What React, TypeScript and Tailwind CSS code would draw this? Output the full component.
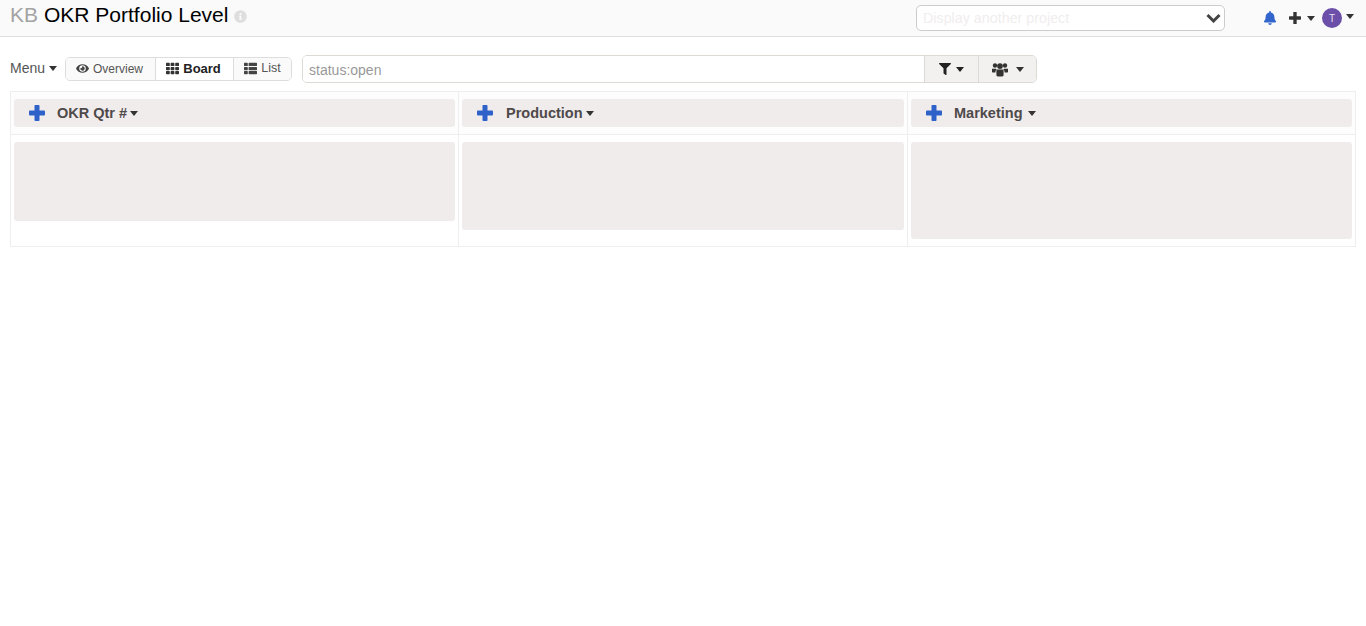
import { FaInfoCircle, FaEye, FaTh, FaThList, FaBell, FaFilter } from "react-icons/fa";

function Caret({ className = "" }: { className?: string }) {
  return <span className={"inline-block w-0 h-0 border-x-[4.5px] border-t-[5px] border-x-transparent border-t-current " + className} />;
}

function ThickPlus({ className = "", bar = 5 }: { className?: string; bar?: number }) {
  const a = (16 - bar) / 2;
  return (
    <svg viewBox="0 0 16 16" className={className} fill="currentColor">
      <rect x={a} y="0" width={bar} height="16" rx="0.8" />
      <rect x="0" y={a} width="16" height={bar} rx="0.8" />
    </svg>
  );
}

function Users({ className = "" }: { className?: string }) {
  return (
    <svg viewBox="0 0 16 14" className={className} fill="currentColor">
      <circle cx="3" cy="3" r="2.2" />
      <circle cx="13" cy="3" r="2.2" />
      <circle cx="8" cy="3.6" r="2.9" />
      <path d="M0 6.3h3.6c.6 0 1 .3 1.1.7-.9.7-1.3 1.7-1.3 3H0.6C.2 10 0 9.6 0 9.2z" />
      <path d="M16 6.3h-3.6c-.6 0-1 .3-1.1.7.9.7 1.3 1.7 1.3 3h2.8c.4 0 .6-.4.6-.8z" />
      <path d="M4.4 8.4c0-.9.6-1.4 1.4-1.4h4.4c.8 0 1.4.5 1.4 1.4v4.2c0 .8-.5 1.4-1.4 1.4H5.8c-.9 0-1.4-.6-1.4-1.4z" />
    </svg>
  );
}

const columns = [
  { name: "OKR Qtr #", cardH: "h-[79px]", labelM: "ml-[12px]", caretM: "ml-[3px]" },
  { name: "Production", cardH: "h-[88px]", labelM: "ml-[13px]", caretM: "ml-[3px]" },
  { name: "Marketing", cardH: "h-[97px]", labelM: "ml-[12px]", caretM: "ml-[5px]" },
];

export default function App() {
  return (
    <div className="min-h-[626px] bg-white font-['Liberation_Sans',Arial,sans-serif] text-[#333]">
      <header className="h-[37px] bg-[#fafafa] border-b border-[#dedede] flex items-start pl-[10px]">
        <h1 className="text-[21px] leading-[30px] flex items-center text-black">
          <span className="text-[#a3a3a3] mr-[6px]">KB</span>
          <span>OKR Portfolio Level</span>
          <FaInfoCircle className="ml-[6px] mt-[3px] text-[#dedede] w-[13px] h-[13px]" />
        </h1>
        <div className="ml-auto flex items-center pt-[5px] mr-[12px]">
          <div className="w-[309px] h-[26px] bg-white border border-[#cccccc] rounded-[5px] flex items-center justify-between pl-[6px] pr-[3px]">
            <span className="text-[14.3px] pt-[2px] text-[#f0eeee]">Display another project</span>
            <svg viewBox="0 0 15 10" className="w-[15px] h-[10px] text-[#444]" fill="none" stroke="currentColor" strokeWidth="3">
              <path d="M1.5 2l6 6 6-6" />
            </svg>
          </div>
          <FaBell className="ml-[38px] w-[14px] h-[14px] text-[#3366cc]" />
          <ThickPlus bar={4.5} className="ml-[12px] w-[12px] h-[12px] text-[#333]" />
          <Caret className="ml-[6px] text-[#333]" />
          <div className="ml-[7px] w-[20px] h-[20px] rounded-full bg-[#6b4fa8] text-[#e8e0f0] text-[10px] flex items-center justify-center">T</div>
          <Caret className="ml-[4px] mb-[4px] text-[#333]" />
        </div>
      </header>

      <div className="flex items-center pl-[10px] mt-[18px] h-[28px]">
        <span className="text-[14px] leading-[24px] mb-[2px] text-[#555] flex items-center gap-[4px]">Menu <Caret className="text-[#333]" /></span>
        <div className="ml-[8px] h-[24px] flex border border-[#dddddd] rounded-[5px] text-[12px] text-[#555] overflow-hidden mb-[1px]">
          <span className="w-[90px] flex items-center justify-center gap-[4px] pr-[2px] bg-[#fafafa] border-r border-[#dddddd]">
            <FaEye className="w-[13px] h-[13px] text-[#444]" />Overview
          </span>
          <span className="w-[78px] flex items-center justify-center gap-[4px] pr-[2px] bg-white border-r border-[#dddddd] text-[13px] font-bold text-[#222]">
            <FaTh className="w-[13px] h-[13px] text-[#333]" />Board
          </span>
          <span className="w-[57px] flex items-center justify-center gap-[4px] bg-[#fafafa] text-[12.5px]">
            <FaThList className="w-[13px] h-[13px] text-[#444]" />List
          </span>
        </div>
        <div className="ml-[10px] w-[735px] h-[28px] flex border border-[#dddad6] rounded-[5px] overflow-hidden">
          <span className="flex-1 flex items-center pl-[6px] pt-[2px] text-[14px] text-[#999] bg-white">status:open</span>
          <span className="w-[54px] flex items-center justify-center gap-[5px] bg-[#f3f1ef] border-l border-[#dddad6] text-[#222]">
            <FaFilter className="w-[12px] h-[12px]" /><Caret />
          </span>
          <span className="w-[58px] flex items-center justify-center gap-[7px] bg-[#f3f1ef] border-l border-[#dddad6] text-[#333]">
            <Users className="w-[16px] h-[15px]" /><Caret className="ml-[1px]" />
          </span>
        </div>
      </div>

      <div className="mx-[10px] mt-[8px] border border-[#eeeeee] grid grid-cols-[448px_449px_447px]">
        {columns.map((c, i) => (
          <div key={c.name} className={"h-[43px] bg-[#fdfdfd] border-b border-[#eeeeee] pt-[7px] pl-[3px] pr-[3px] " + (i < 2 ? "border-r" : "")}>
            <div className="h-[28px] bg-[#f0ecec] rounded-[3px] flex items-center pl-[15px] text-[14.5px] font-bold text-[#4f4a4a]">
              <ThickPlus className="w-[16px] h-[16px] text-[#2f62c9]" />
              <span className={c.labelM + " pt-[2px]"}>{c.name}</span>
              <Caret className={c.caretM + " text-[#333]"} />
            </div>
          </div>
        ))}
        {columns.map((c, i) => (
          <div key={c.name} className={"h-[111px] pt-[7px] pl-[3px] pr-[3px] border-[#eeeeee] " + (i < 2 ? "border-r" : "")}>
            <div className={c.cardH + " bg-[#f0ecec] rounded-[3px]"} />
          </div>
        ))}
      </div>
    </div>
  );
}
